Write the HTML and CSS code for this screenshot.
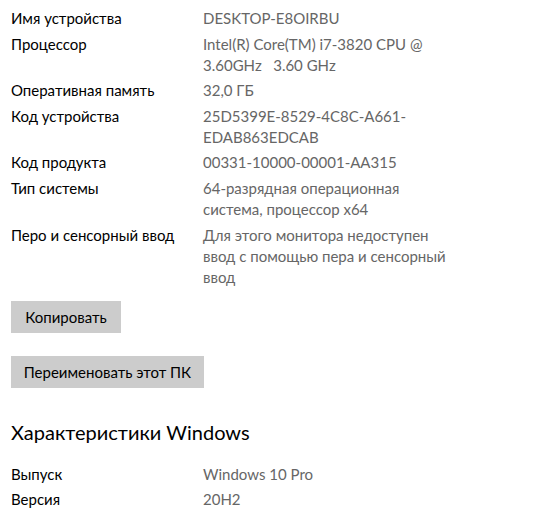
FILE: index.html
```html
<!DOCTYPE html>
<html lang="ru">
<head>
    <meta charset="UTF-8">
    <title>О программе</title>
    <link rel="stylesheet" href="styles.css">
</head>
<body>
    <div class="about">
        <dl class="specs">
            <div class="spec-row">
                <dt>Имя устройства</dt>
                <dd>DESKTOP-E8OIRBU</dd>
            </div>
            <div class="spec-row">
                <dt>Процессор</dt>
                <dd>Intel(R) Core(TM) i7-3820 CPU @<br>3.60GHz&nbsp;&nbsp; 3.60 GHz</dd>
            </div>
            <div class="spec-row">
                <dt>Оперативная память</dt>
                <dd>32,0 ГБ</dd>
            </div>
            <div class="spec-row">
                <dt>Код устройства</dt>
                <dd>25D5399E-8529-4C8C-A661-<br>EDAB863EDCAB</dd>
            </div>
            <div class="spec-row">
                <dt>Код продукта</dt>
                <dd>00331-10000-00001-AA315</dd>
            </div>
            <div class="spec-row">
                <dt>Тип системы</dt>
                <dd>64-разрядная операционная<br>система, процессор x64</dd>
            </div>
            <div class="spec-row">
                <dt>Перо и сенсорный ввод</dt>
                <dd>Для этого монитора недоступен<br>ввод с помощью пера и сенсорный<br>ввод</dd>
            </div>
        </dl>

        <button class="btn btn-copy" type="button">Копировать</button>
        <button class="btn btn-rename" type="button">Переименовать этот ПК</button>

        <h2 class="section-title">Характеристики Windows</h2>

        <dl class="specs">
            <div class="spec-row">
                <dt>Выпуск</dt>
                <dd>Windows 10 Pro</dd>
            </div>
            <div class="spec-row">
                <dt>Версия</dt>
                <dd>20H2</dd>
            </div>
        </dl>
    </div>
</body>
</html>
```

FILE: styles.css
```css
body {
    margin: 0;
    background-color: #fff;
    color: #000;
    font-family: 'Lato', 'Noto Sans', sans-serif;
    font-size: 15px;
}

.about {
    padding: 8px 0 0 11px;
    display: flex;
    flex-direction: column;
    align-items: flex-start;
}

.specs {
    margin: 0;
}

.spec-row {
    display: grid;
    grid-template-columns: 192px 260px;
    line-height: 21px;
    margin-bottom: 4.6px;
}

.spec-row dt {
    color: #000;
}

.spec-row dd {
    margin: 0;
    color: #666;
    white-space: nowrap;
}

.btn {
    font-family: inherit;
    font-size: 15px;
    color: #000;
    background-color: #ccc;
    border: none;
    height: 32px;
    padding: 0;
    margin: 0;
    white-space: nowrap;
}

.btn-copy {
    margin-top: 8.4px;
    width: 110px;
}

.btn-rename {
    margin-top: 23px;
    width: 193px;
}

.section-title {
    margin: 30px 0 18px;
    font-size: 20px;
    font-weight: normal;
    line-height: 28px;
}
```
